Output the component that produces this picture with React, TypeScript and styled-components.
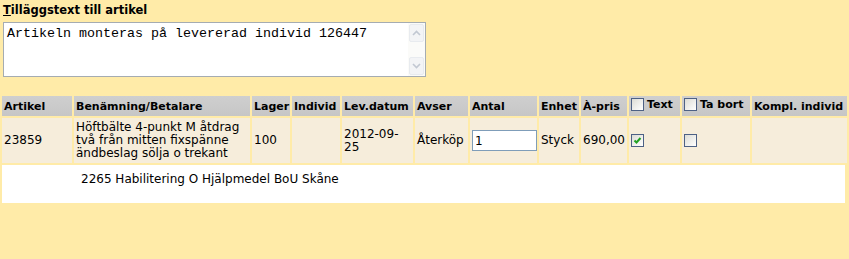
import React from "react";
import styled, { createGlobalStyle } from "styled-components";

const GlobalStyle = createGlobalStyle`
  body {
    margin: 0;
    background: #ffeba8;
    font-family: "DejaVu Sans", Verdana, sans-serif;
    font-size: 12px;
    color: #000;
  }
`;

const Page = styled.div`
  padding-top: 4px;
`;

const Section = styled.div`
  padding: 0 3px;
`;

const Title = styled.div`
  font-weight: bold;
  font-size: 11.5px;
  line-height: 13px;
  height: 13px;
`;

const TextBox = styled.div`
  margin-top: 5px;
  width: 421px;
  height: 53px;
  display: flex;
  border: 1px solid #a5acb2;
  background: #fff;
`;

const Note = styled.textarea`
  flex: 1;
  border: 0;
  outline: none;
  resize: none;
  overflow: hidden;
  padding: 3px 3px;
  margin: 0;
  font-family: "Liberation Mono", "Courier New", monospace;
  font-size: 13.33px;
  line-height: 15px;
  color: #000;
  background: #fff;
`;

const ScrollBar = styled.div`
  width: 17px;
  display: flex;
  flex-direction: column;
  justify-content: space-between;
  background: #fbfbf9;
`;

const ScrollButton = styled.div`
  height: 16px;
  margin: 1px;
  border: 1px solid #e8ebef;
  border-radius: 2px;
  background: #f3f4f6;
  display: flex;
  align-items: center;
  justify-content: center;
`;

const Grid = styled.table`
  margin-top: 17px;
  width: 849px;
  table-layout: fixed;
  border-spacing: 2px;
  font-size: 12px;
  line-height: 13px;
`;

const HeadCell = styled.th`
  background: linear-gradient(#cfcfcf, #c6c6c6);
  height: 20px;
  padding: 0 0 0 2px;
  text-align: left;
  font-size: 11px;
  font-weight: bold;
  white-space: nowrap;
  overflow: hidden;
`;

const HeadLabel = styled.span`
  display: inline-flex;
  align-items: center;
  gap: 3px;
`;

const Cell = styled.td`
  background: #f6eddb;
  height: 45px;
  padding: 0 1px 0 2px;
  vertical-align: middle;
`;

const PayerCell = styled.td`
  height: 38px;
  padding: 0;
  vertical-align: top;
`;

const PayerBox = styled.div`
  background: #fff;
  height: 38px;
  margin-right: 2px;
  padding: 8px 0 0 79px;
  box-sizing: border-box;
`;

const QtyInput = styled.input`
  width: 65px;
  height: 21px;
  box-sizing: border-box;
  border: 1px solid #7f9db9;
  padding: 0 2px;
  font-family: "DejaVu Sans", Verdana, sans-serif;
  font-size: 12px;
  background: #fff;
  outline: none;
`;

const Box = styled.span`
  display: inline-flex;
  align-items: center;
  justify-content: center;
  width: 13px;
  height: 13px;
  box-sizing: border-box;
  border: 1px solid #4d6185;
  background: linear-gradient(135deg, #dcdcd5, #ffffff);
  vertical-align: middle;
`;

const Check = ({ checked }: { checked?: boolean }) => (
  <Box>
    {checked && (
      <svg width="9" height="9" viewBox="0 0 9 9">
        <path d="M1.5 4.5 L3.5 6.5 L7.5 2" stroke="#21a121" strokeWidth="2" fill="none" />
      </svg>
    )}
  </Box>
);

const Arrow = ({ up }: { up?: boolean }) => (
  <svg width="9" height="6" viewBox="0 0 9 6">
    <path
      d={up ? "M1 5 L4.5 1.5 L8 5" : "M1 1 L4.5 4.5 L8 1"}
      stroke="#c2c8d2"
      strokeWidth="1.6"
      fill="none"
    />
  </svg>
);

const widths = [70, 176, 38, 48, 71, 53, 67, 40, 46, 51, 68, 95];

const App = () => {
  return (
    <Page>
      <GlobalStyle />
      <Section>
        <Title>
          <u>T</u>illäggstext till artikel
        </Title>
        <TextBox>
          <Note defaultValue="Artikeln monteras på levererad individ 126447" />
          <ScrollBar>
            <ScrollButton>
              <Arrow up />
            </ScrollButton>
            <ScrollButton>
              <Arrow />
            </ScrollButton>
          </ScrollBar>
        </TextBox>
      </Section>
      <Grid>
        <colgroup>
          {widths.map((w, i) => (
            <col key={i} style={{ width: w }} />
          ))}
        </colgroup>
        <thead>
          <tr>
            <HeadCell>Artikel</HeadCell>
            <HeadCell>Benämning/Betalare</HeadCell>
            <HeadCell>Lager</HeadCell>
            <HeadCell>Individ</HeadCell>
            <HeadCell>Lev.datum</HeadCell>
            <HeadCell>Avser</HeadCell>
            <HeadCell>Antal</HeadCell>
            <HeadCell>Enhet</HeadCell>
            <HeadCell>À-pris</HeadCell>
            <HeadCell>
              <HeadLabel>
                <Check />
                Text
              </HeadLabel>
            </HeadCell>
            <HeadCell>
              <HeadLabel>
                <Check />
                Ta bort
              </HeadLabel>
            </HeadCell>
            <HeadCell>Kompl. individ</HeadCell>
          </tr>
        </thead>
        <tbody>
          <tr>
            <Cell>23859</Cell>
            <Cell>Höftbälte 4-punkt M åtdrag två från mitten fixspänne ändbeslag sölja o trekant</Cell>
            <Cell>100</Cell>
            <Cell />
            <Cell>2012-09-25</Cell>
            <Cell>Återköp</Cell>
            <Cell>
              <QtyInput defaultValue="1" />
            </Cell>
            <Cell>Styck</Cell>
            <Cell>690,00</Cell>
            <Cell>
              <Check checked />
            </Cell>
            <Cell>
              <Check />
            </Cell>
            <Cell />
          </tr>
          <tr>
            <PayerCell colSpan={12}>
              <PayerBox>2265 Habilitering O Hjälpmedel BoU Skåne</PayerBox>
            </PayerCell>
          </tr>
        </tbody>
      </Grid>
    </Page>
  );
};

export default App;
